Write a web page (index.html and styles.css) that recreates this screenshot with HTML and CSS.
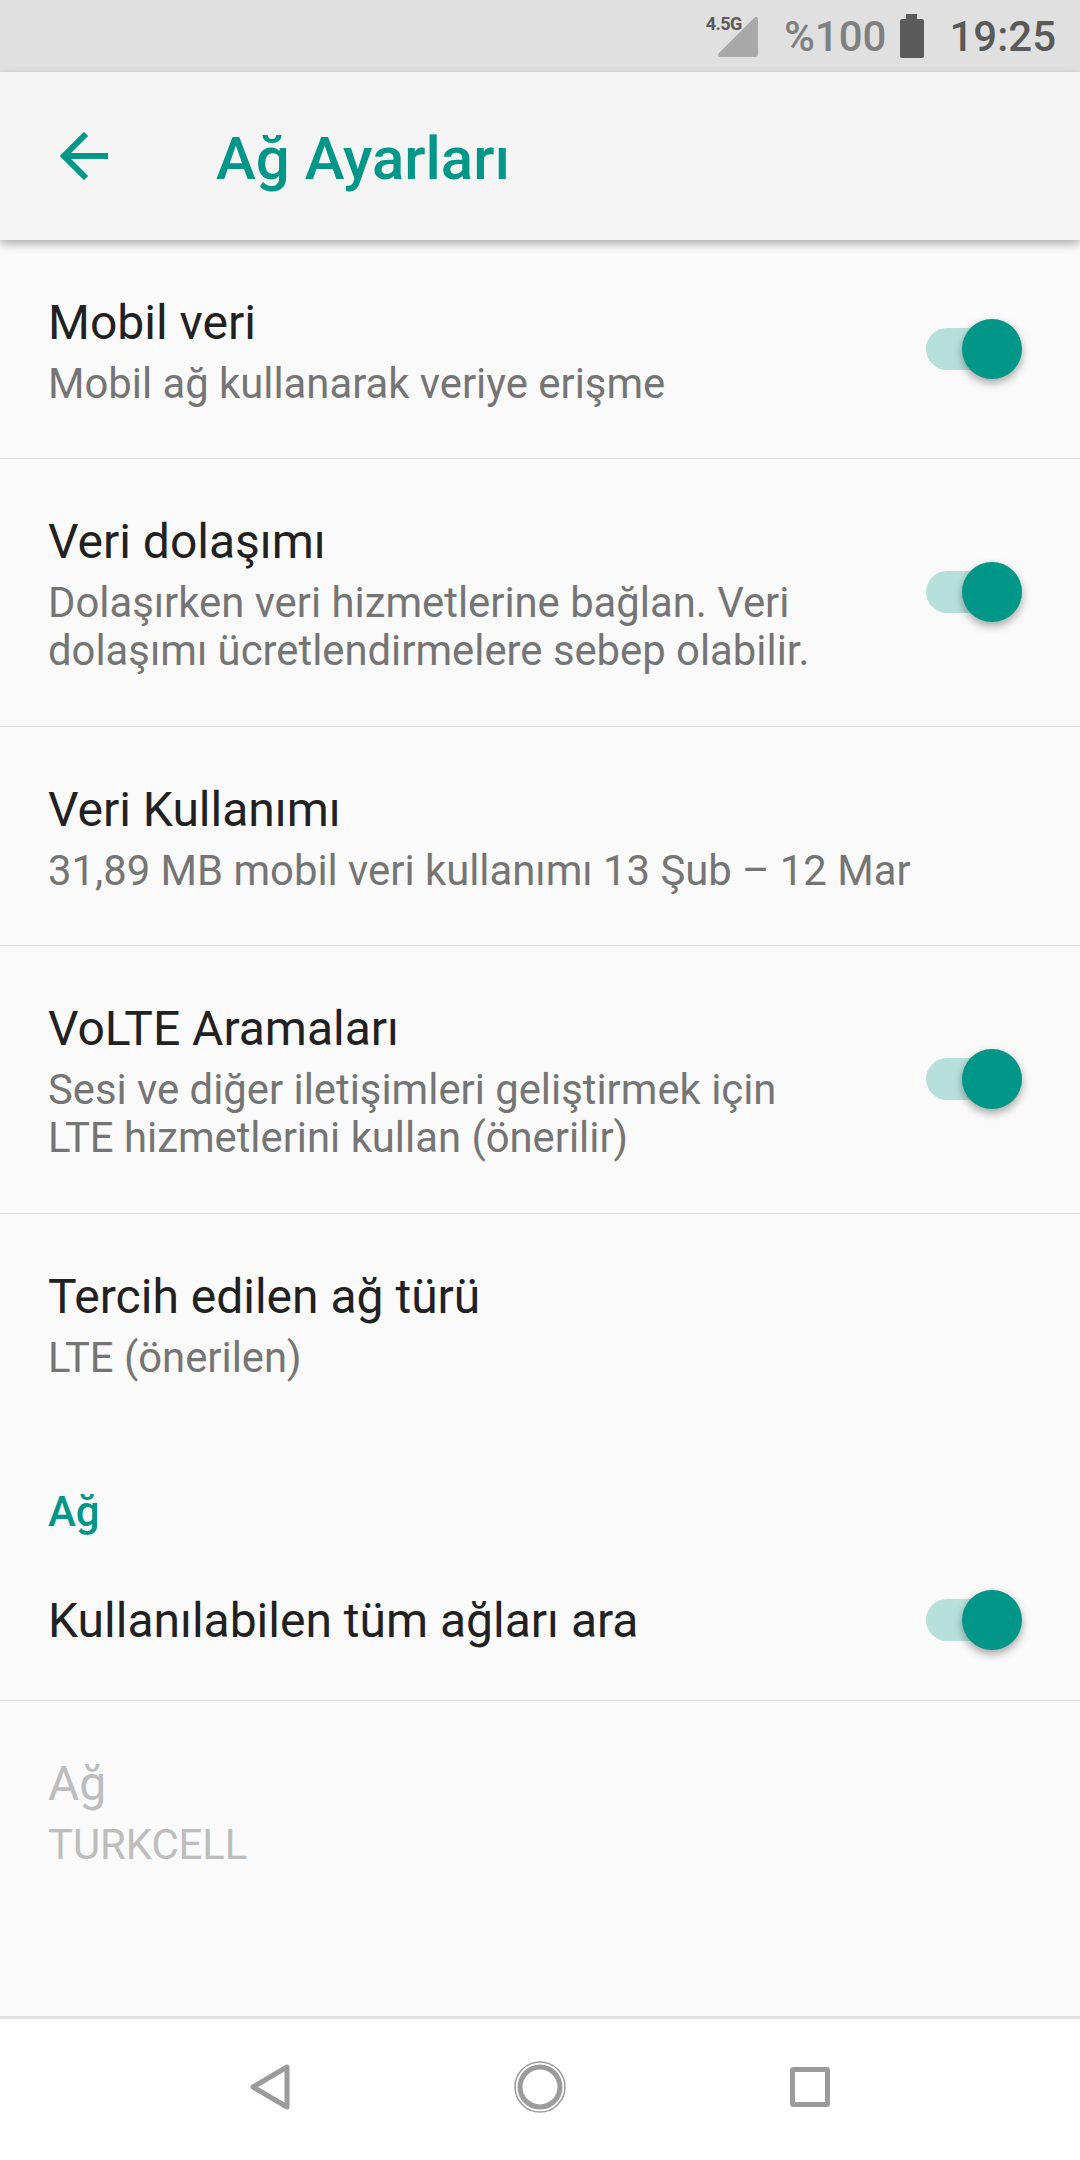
FILE: index.html
```html
<!DOCTYPE html>
<html lang="tr">
<head>
    <meta charset="UTF-8">
    <meta name="viewport" content="width=device-width, initial-scale=1.0">
    <title>Ağ Ayarları</title>
    <link rel="stylesheet" href="styles.css">
</head>
<body>
    <div class="status-bar">
        <div class="signal">
            <svg width="40" height="40" viewBox="0 0 40 40"><path d="M36 1 Q40 -2 40 3 V37 Q40 40 37 40 H3 Q-2 40 1 36 Z" fill="#a9a9a9"/></svg>
            <span class="signal-label">4.5G</span>
        </div>
        <span class="battery-text">%100</span>
        <svg class="battery" width="26" height="44" viewBox="0 0 26 44"><path d="M7 0 H18 V5 H23 Q25 5 25 7 V42 Q25 44 23 44 H3 Q1 44 1 42 V7 Q1 5 3 5 H7 Z" fill="#5a5a5a"/></svg>
        <span class="clock">19:25</span>
    </div>

    <header class="app-bar">
        <svg class="back" width="50" height="48" viewBox="0 0 50 48"><path d="M4 24 H49 M27 2 L5 24 L27 46" fill="none" stroke="#009688" stroke-width="6"/></svg>
        <h1>Ağ Ayarları</h1>
    </header>

    <main class="settings">
        <div class="row row-1 divided">
            <div class="row-text">
                <div class="row-title">Mobil veri</div>
                <div class="row-sub">Mobil ağ kullanarak veriye erişme</div>
            </div>
            <div class="switch"></div>
        </div>
        <div class="row row-2 divided">
            <div class="row-text">
                <div class="row-title">Veri dolaşımı</div>
                <div class="row-sub">Dolaşırken veri hizmetlerine bağlan. Veri<br>dolaşımı ücretlendirmelere sebep olabilir.</div>
            </div>
            <div class="switch"></div>
        </div>
        <div class="row row-1 divided">
            <div class="row-text">
                <div class="row-title">Veri Kullanımı</div>
                <div class="row-sub">31,89 MB mobil veri kullanımı 13 Şub – 12 Mar</div>
            </div>
        </div>
        <div class="row row-2 divided">
            <div class="row-text">
                <div class="row-title">VoLTE Aramaları</div>
                <div class="row-sub">Sesi ve diğer iletişimleri geliştirmek için<br>LTE hizmetlerini kullan (önerilir)</div>
            </div>
            <div class="switch"></div>
        </div>
        <div class="row row-1">
            <div class="row-text">
                <div class="row-title">Tercih edilen ağ türü</div>
                <div class="row-sub">LTE (önerilen)</div>
            </div>
        </div>

        <div class="section-title">Ağ</div>
        <div class="row row-single divided">
            <div class="row-text">
                <div class="row-title">Kullanılabilen tüm ağları ara</div>
            </div>
            <div class="switch"></div>
        </div>
        <div class="row row-1 disabled">
            <div class="row-text">
                <div class="row-title">Ağ</div>
                <div class="row-sub">TURKCELL</div>
            </div>
        </div>
    </main>

    <nav class="nav-bar">
        <svg width="40" height="46" viewBox="0 0 40 46"><path d="M37 3 V43 L3 23 Z" fill="none" stroke="#9b9b9b" stroke-width="5" stroke-linejoin="round"/></svg>
        <svg width="52" height="52" viewBox="0 0 52 52"><circle cx="26" cy="26" r="25" fill="none" stroke="#9b9b9b" stroke-width="1.5"/><circle cx="26" cy="26" r="20" fill="none" stroke="#9b9b9b" stroke-width="5"/></svg>
        <svg width="40" height="40" viewBox="0 0 40 40"><rect x="2.5" y="2.5" width="35" height="35" rx="1" fill="none" stroke="#9b9b9b" stroke-width="5"/></svg>
    </nav>
</body>
</html>
```

FILE: styles.css
```css
* {
    box-sizing: border-box;
}
body {
    margin: 0;
    width: 1080px;
    height: 2160px;
    display: flex;
    flex-direction: column;
    font-family: Roboto, sans-serif;
    background: #fafafa;
    overflow: hidden;
}
.status-bar {
    height: 72px;
    background: #e0e0e0;
    display: flex;
    align-items: center;
    justify-content: flex-end;
    padding-right: 24px;
    color: #5a5a5a;
    font-size: 42px;
}
.signal {
    position: relative;
    width: 40px;
    height: 40px;
    margin-right: 26px;
    margin-top: 2px;
}
.signal svg {
    display: block;
}
.signal-label {
    position: absolute;
    right: 16px;
    top: -2px;
    font-size: 18px;
    line-height: 18px;
    font-weight: 700;
    letter-spacing: -0.5px;
    color: #5a5a5a;
}
.battery-text {
    color: #808080;
    font-weight: 500;
    margin-right: 13px;
}
.battery {
    margin-right: 24px;
}
.clock {
    font-weight: 500;
}
.app-bar {
    height: 168px;
    background: #f5f5f5;
    display: flex;
    align-items: center;
    padding-left: 59px;
    box-shadow: 0 4px 9px rgba(0, 0, 0, 0.3);
    position: relative;
}
.back {
    margin-right: 107px;
}
h1 {
    margin: 5px 0 0;
    font-size: 60px;
    font-weight: 500;
    color: #009688;
}
.settings {
    flex: 1;
}
.row {
    display: flex;
    justify-content: space-between;
    align-items: center;
    padding: 0 58px 0 48px;
}
.divided {
    border-bottom: 1px solid #e0e0e0;
}
.row-1 {
    height: 219px;
}
.row-2 {
    height: 268px;
    padding-bottom: 1px;
}
.row-single {
    height: 165px;
    padding-top: 6px;
}
.row-single .switch {
    margin-bottom: 2px;
}
.row-title {
    font-size: 48px;
    line-height: 64px;
    color: #212121;
}
.row-sub {
    font-size: 41.8px;
    line-height: 48px;
    margin-top: 5px;
    color: #757575;
}
.section-title {
    font-size: 42px;
    line-height: 48px;
    font-weight: 500;
    color: #009688;
    padding-left: 48px;
    margin-top: 55px;
}
.switch {
    position: relative;
    width: 96px;
    height: 42px;
    border-radius: 21px;
    background: #b8e0db;
}
.switch::after {
    content: "";
    position: absolute;
    right: 0;
    top: -9px;
    width: 60px;
    height: 60px;
    border-radius: 50%;
    background: #009688;
    box-shadow: 0 4px 8px rgba(0, 0, 0, 0.35);
}
.disabled .row-title,
.disabled .row-sub {
    color: #bdbdbd;
}
.nav-bar {
    height: 144px;
    background: #fff;
    border-top: 3px solid #e0e0e0;
    display: flex;
    align-items: center;
    justify-content: center;
    gap: 224px;
    padding-bottom: 5px;
}
```
